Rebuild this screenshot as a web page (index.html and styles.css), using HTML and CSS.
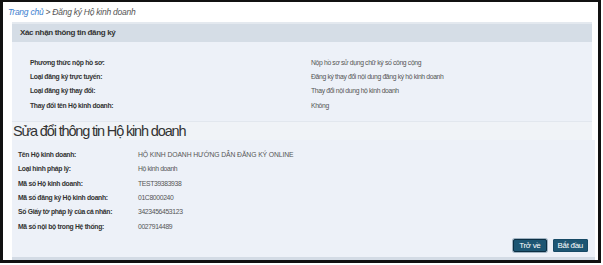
FILE: index.html
```html
<!DOCTYPE html>
<html lang="vi">
<head>
<meta charset="utf-8">
<title>Đăng ký Hộ kinh doanh</title>
<link rel="stylesheet" href="styles.css">
</head>
<body>
<div class="frame">
  <div class="crumb"><a class="crumb-link" href="#">Trang chủ</a> &gt; Đăng ký Hộ kinh doanh</div>

  <div class="box">
    <div class="box-head">Xác nhận thông tin đăng ký</div>
    <div class="box-body">
      <div class="row"><span class="lbl">Phương thức nộp hồ sơ:</span><span class="val">Nộp hồ sơ sử dụng chữ ký số công cộng</span></div>
      <div class="row"><span class="lbl">Loại đăng ký trực tuyến:</span><span class="val">Đăng ký thay đổi nội dung đăng ký hộ kinh doanh</span></div>
      <div class="row"><span class="lbl">Loại đăng ký thay đổi:</span><span class="val">Thay đổi nội dung hộ kinh doanh</span></div>
      <div class="row"><span class="lbl">Thay đổi tên Hộ kinh doanh:</span><span class="val">Không</span></div>
    </div>
  </div>

  <div class="section">
    <h2 class="section-title">Sửa đổi thông tin Hộ kinh doanh</h2>
    <div class="section-body">
      <div class="row2"><span class="lbl">Tên Hộ kinh doanh:</span><span class="val val-caps">HỘ KINH DOANH HƯỚNG DẪN ĐĂNG KÝ ONLINE</span></div>
      <div class="row2"><span class="lbl">Loại hình pháp lý:</span><span class="val">Hộ kinh doanh</span></div>
      <div class="row2"><span class="lbl">Mã số Hộ kinh doanh:</span><span class="val">TEST39383938</span></div>
      <div class="row2"><span class="lbl">Mã số đăng ký Hộ kinh doanh:</span><span class="val">01C8000240</span></div>
      <div class="row2"><span class="lbl">Số Giấy tờ pháp lý của cá nhân:</span><span class="val">3423456453123</span></div>
      <div class="row2"><span class="lbl">Mã số nội bộ trong Hệ thống:</span><span class="val">0027914489</span></div>
      <div class="actions">
        <button class="btn btn-focus" type="button">Trở về</button>
        <button class="btn" type="button">Bắt đầu</button>
      </div>
    </div>
  </div>
</div>
</body>
</html>
```

FILE: styles.css
```css
* { box-sizing: border-box; }
html, body { margin: 0; padding: 0; background: #ffffff; }
body { font-family: "Liberation Sans", Arial, sans-serif; color: #333; }

.frame {
  width: 601px;
  height: 263px;
  border-style: solid;
  border-color: #111;
  border-width: 2px 3px 3px 3px;
  background: #fff;
  display: flex;
  flex-direction: column;
}

.crumb {
  height: 20px;
  line-height: 20px;
  padding-left: 5px;
  font-size: 8.5px;
  font-style: italic;
  letter-spacing: -0.25px;
  color: #555;
}
.crumb-link { color: #3d7fd0; text-decoration: none; }

.box {
  margin: 0 6px 0 9px;
  border-top: 2px solid #e4e9ef;
}
.box-head {
  height: 18px;
  line-height: 18px;
  background: #d5dde6;
  padding-left: 8px;
  font-size: 8px;
  font-weight: bold;
  letter-spacing: -0.35px;
  color: #333;
}
.box-body {
  background: #edf1f8;
  padding: 14px 0 8px 18px;
  border-bottom: 1px solid #e2e7ee;
}
.row {
  display: grid;
  grid-template-columns: 281px 1fr;
  height: 14.2px;
  line-height: 14.2px;
  font-size: 6.8px;
}
.lbl { font-weight: bold; color: #333; letter-spacing: -0.3px; }
.val { color: #555; letter-spacing: -0.35px; }
.val-caps { letter-spacing: -0.1px; }

.section {
  margin: 0 3px 0 9px;
  display: flex;
  flex-direction: column;
}
.section-title {
  margin: 0 3px 0 0;
  height: 18px;
  line-height: 18px;
  background: #f0f3f7;
  padding-left: 1px;
  font-size: 14.5px;
  letter-spacing: -1.15px;
  font-weight: normal;
  color: #333;
}
.section-body {
  background: #edf1f8;
  padding: 8px 7px 5px 6px;
  border-bottom: 3px solid #d3dbe5;
}
.row2 {
  display: grid;
  grid-template-columns: 120px 1fr;
  height: 14.4px;
  line-height: 14.4px;
  font-size: 6.8px;
}
.actions {
  display: flex;
  justify-content: flex-end;
  gap: 6px;
  margin-top: 5px;
}
.btn {
  height: 13px;
  padding: 0 4px;
  border: 1px solid #174a66;
  background: #1d5673;
  color: #fff;
  font-family: "Liberation Sans", Arial, sans-serif;
  font-size: 8px;
  letter-spacing: -0.3px;
  line-height: 11px;
  border-radius: 1px;
}
.btn-focus {
  padding: 0 5px;
  border-color: #0c2f44;
  border-radius: 2px;
  box-shadow: 0 0 0 1px #9fb3c2;
}
```
